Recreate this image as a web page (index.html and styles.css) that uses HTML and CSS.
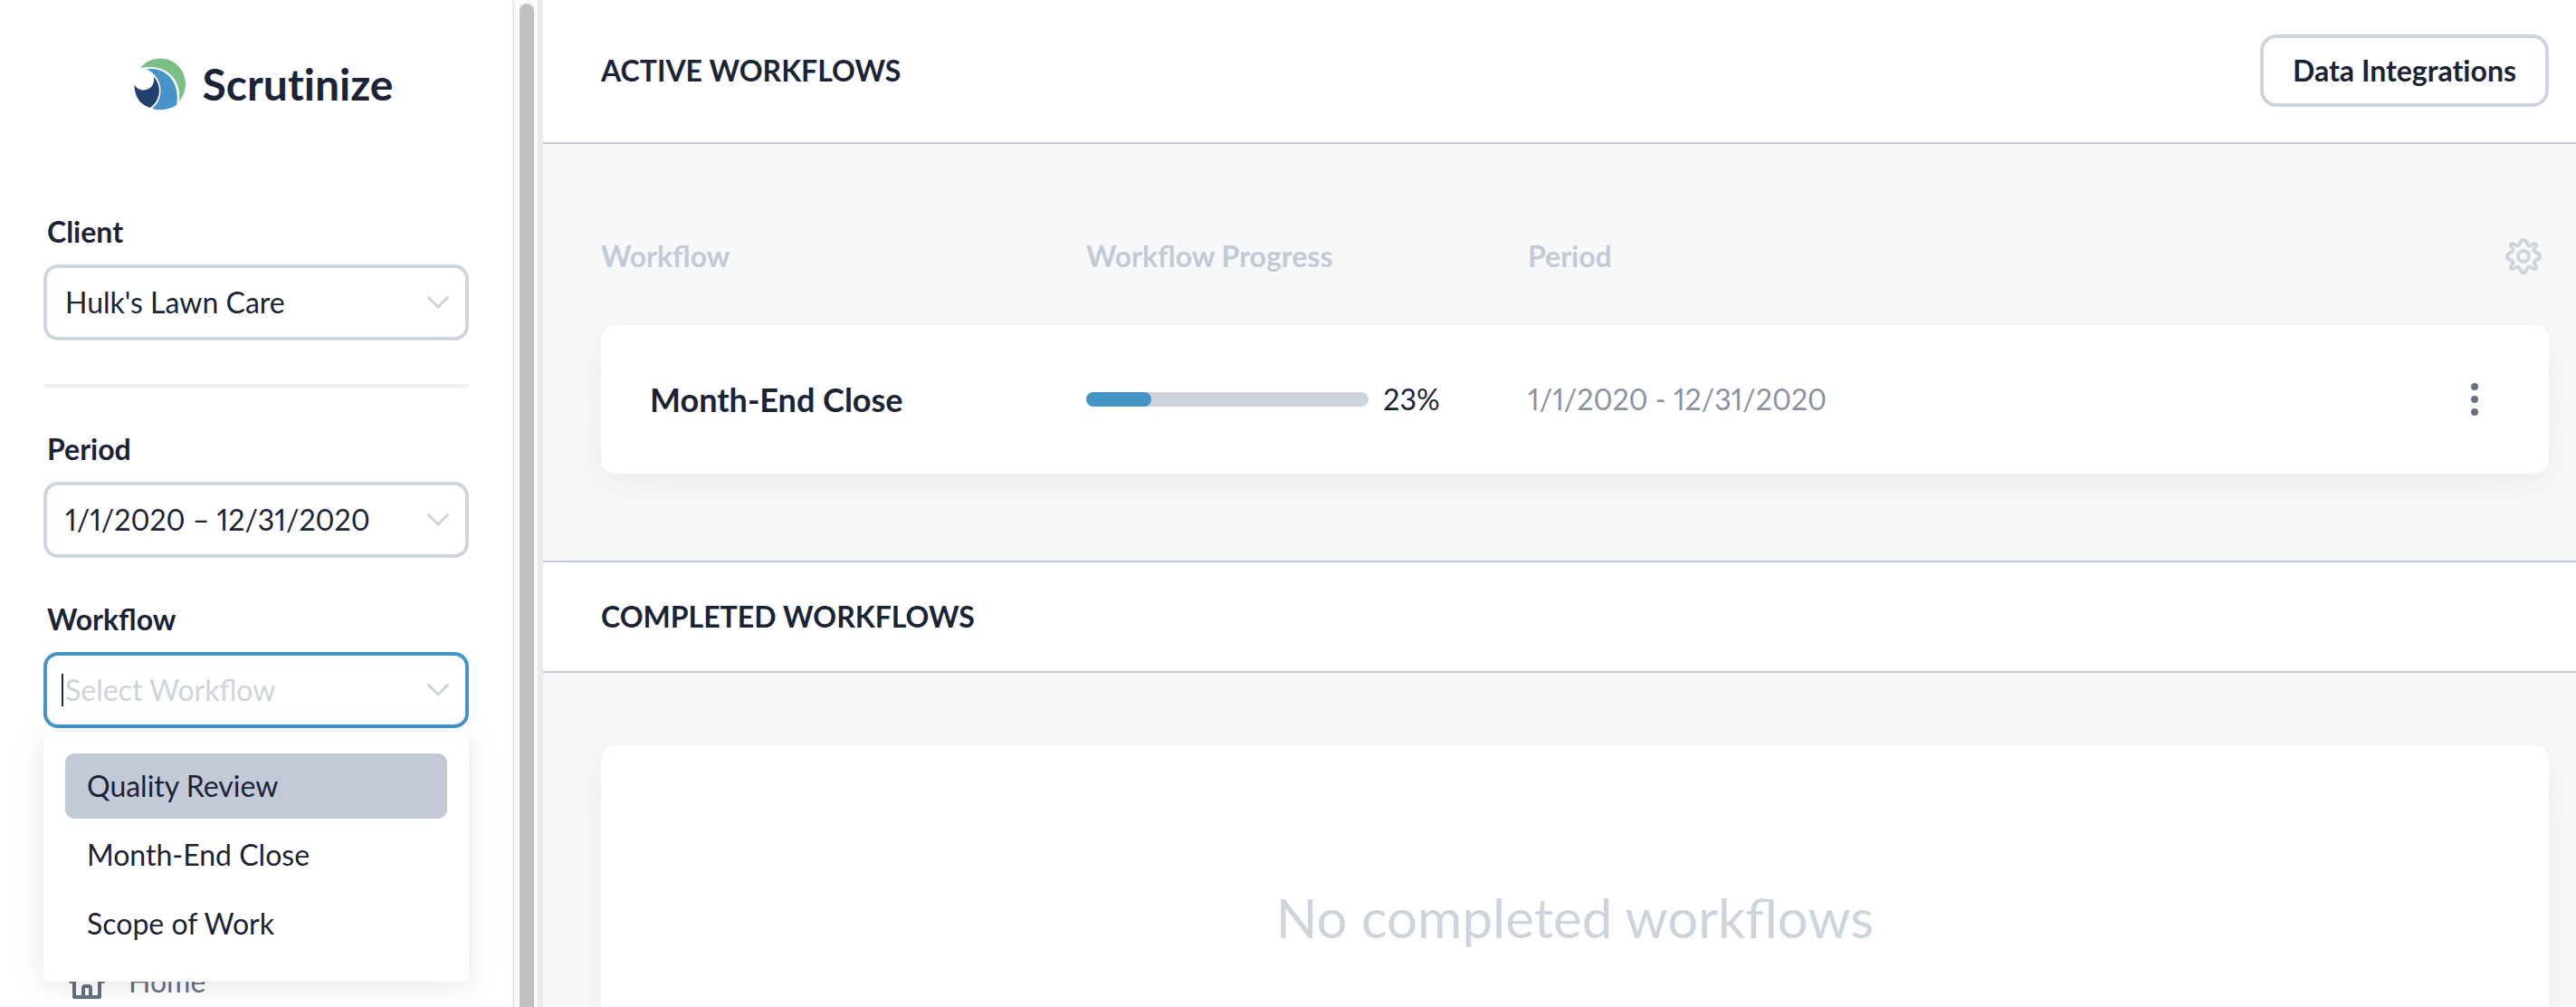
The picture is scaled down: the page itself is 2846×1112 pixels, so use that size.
FILE: index.html
```html
<!DOCTYPE html>
<html lang="en">
<head>
    <meta charset="UTF-8">
    <meta name="viewport" content="width=device-width, initial-scale=1.0">
    <title>Scrutinize</title>
    <link rel="stylesheet" href="styles.css">
</head>

<body>
    <aside class="sidebar">
        <a href="#" class="logo">
            <svg class="logo-mark" viewBox="0 0 58 58" aria-hidden="true">
                <path fill="#7cbf86" d="M7 11C13 4 20 .500 29 .500C45 .500 57 13 57 29C57 36 54 43 50 48C53 24 36 5 7 11Z"/>
                <path fill="#4694c8" d="M14 12.500C34 9 52 26 47 52C40 57 30 58.500 20 56C33 46 34 22 14 12.500Z"/>
                <path fill="#233f6b" d="M.500 29C2 33 6 35.500 11 35.500C18 35 23 30 22 21C30 30 31 45 18 55C7 52 0 42 .500 29Z"/>
            </svg>
            Scrutinize
        </a>

        <form class="filters">
            <div class="field">
                <label for="client">Client</label>
                <div class="select-box">
                    <select id="client">
                        <option>Hulk's Lawn Care</option>
                    </select>
                    <svg class="chevron" viewBox="0 0 24 14" aria-hidden="true"><path d="M1.500 1.500L12 12L22.500 1.500"/></svg>
                </div>
            </div>

            <hr>

            <div class="field">
                <label for="period">Period</label>
                <div class="select-box">
                    <select id="period" class="dates">
                        <option>1/1/2020 – 12/31/2020</option>
                    </select>
                    <svg class="chevron" viewBox="0 0 24 14" aria-hidden="true"><path d="M1.500 1.500L12 12L22.500 1.500"/></svg>
                </div>
            </div>

            <div class="field">
                <label for="workflow">Workflow</label>
                <div class="select-box active">
                    <span class="caret"></span>
                    <input type="text" id="workflow" placeholder="Select Workflow" autocomplete="off">
                    <svg class="chevron" viewBox="0 0 24 14" aria-hidden="true"><path d="M1.500 1.500L12 12L22.500 1.500"/></svg>
                    <ul class="menu">
                        <li><button type="button" class="selected">Quality Review</button></li>
                        <li><button type="button">Month-End Close</button></li>
                        <li><button type="button">Scope of Work</button></li>
                    </ul>
                </div>
            </div>
        </form>

        <nav>
            <a href="#" class="nav-link">
                <svg viewBox="0 0 40 40" aria-hidden="true"><path d="M6 20H2L20 3L38 20H34M6 19V37H34V19M16 37V27Q16 25 18 25H22Q24 25 24 27V37"/></svg>
                Home
            </a>
        </nav>
    </aside>
    <div class="scrollbar"><div class="thumb"></div></div>

    <main>
        <header class="section-header top">
            <h2>Active Workflows</h2>
            <button type="button" class="btn">Data Integrations</button>
        </header>
        <section class="section-body">
            <table>
                <thead>
                    <tr>
                        <th class="col-name">Workflow</th>
                        <th class="col-progress">Workflow Progress</th>
                        <th>Period</th>
                        <th>
                            <button type="button" class="icon-btn" aria-label="Table settings">
                                <svg class="gear" viewBox="0 0 40 40" aria-hidden="true">
                                    <path d="M20 2C24.500 2 23 7 26 8.200C29 9.500 30.500 4.500 33.500 6.500C36 9.500 30.500 11 31.800 14C33 17 38 15.500 38 20C38 24.500 33 23 31.800 26C30.500 29 36 30.500 33.500 33.500C30.500 36 29 30.500 26 31.800C23 33 24.500 38 20 38C15.500 38 17 33 14 31.800C11 30.500 9.500 36 6.500 33.500C4 30.500 9.500 29 8.200 26C7 23 2 24.500 2 20C2 15.500 7 17 8.200 14C9.500 11 4 9.500 6.500 6.500C9.500 4 11 9.500 14 8.200C17 7 15.500 2 20 2Z"/>
                                    <circle cx="20" cy="20" r="6"/>
                                </svg>
                            </button>
                        </th>
                    </tr>
                </thead>
                <tbody>
                    <tr>
                        <td class="name">Month-End Close</td>
                        <td>
                            <div class="progress">
                                <div class="track"><div class="bar" style="width: 23%"></div></div>
                                23%
                            </div>
                        </td>
                        <td class="period dates">1/1/2020 - 12/31/2020</td>
                        <td>
                            <button type="button" class="icon-btn" aria-label="More actions">
                                <svg class="dots" viewBox="0 0 8 36" aria-hidden="true"><circle cx="4" cy="4" r="4"/><circle cx="4" cy="18" r="4"/><circle cx="4" cy="32" r="4"/></svg>
                            </button>
                        </td>
                    </tr>
                </tbody>
            </table>
        </section>

        <header class="section-header">
            <h2>Completed Workflows</h2>
        </header>
        <section class="section-body completed">
            <p class="empty">No completed workflows</p>
        </section>
    </main>
</body>
</html>
```

FILE: styles.css
```css
* {
    box-sizing: border-box;
}
body {
    margin: 0;
    display: flex;
    height: 100vh;
    overflow: hidden;
    font-family: Lato, sans-serif;
    font-size: 32px;
    line-height: 40px;
    color: #1b2437;
    background-color: #f6f8fa;
}
button, input, select {
    font: inherit;
    color: inherit;
    background: none;
    border: none;
    margin: 0;
    padding: 0;
}
button {
    cursor: pointer;
}

/* Sidebar */
.sidebar {
    flex: none;
    width: 566px;
    padding: 64px 48px 0;
    background-color: #fff;
}
.logo {
    display: flex;
    justify-content: center;
    align-items: center;
    gap: 18px;
    height: 58px;
    margin-bottom: 114px;
    padding-left: 16px;
    font-size: 48px;
    font-weight: bold;
    font-variant-ligatures: none;
    color: inherit;
    text-decoration: none;
}
.logo-mark {
    width: 58px;
    height: 58px;
}
.field {
    margin-bottom: 48px;
}
.field label {
    display: block;
    padding-left: 4px;
    margin-bottom: 16px;
    font-weight: bold;
}
.select-box {
    position: relative;
    display: flex;
    align-items: center;
    height: 84px;
    padding: 0 18px 0 20px;
    border: 4px solid #cdd4de;
    border-radius: 16px;
}
.select-box.active {
    border-color: #4694c8;
}
.select-box select, .select-box input {
    flex: 1;
    min-width: 0;
    appearance: none;
    outline: none;
}
.select-box input::placeholder {
    color: #cdd4de;
    opacity: 1;
}
.dates {
    font-variant-numeric: proportional-nums;
}
.caret {
    width: 2px;
    height: 36px;
    margin-left: -4px;
    margin-right: 2px;
    background-color: #1e2a4f;
}
.chevron {
    width: 24px;
    height: 14px;
    fill: none;
    stroke: #cdd4de;
    stroke-width: 3;
    stroke-linecap: round;
    stroke-linejoin: round;
}
hr {
    height: 4px;
    margin: 0 0 48px;
    border: none;
    background-color: #eff1f5;
}
.menu {
    position: absolute;
    top: 84px;
    left: -4px;
    right: -4px;
    margin: 0;
    padding: 24px;
    list-style: none;
    background-color: #fff;
    border-radius: 8px;
    box-shadow: 0 4px 32px rgba(0, 0, 0, 0.1);
}
.menu li {
    margin-bottom: 4px;
}
.menu button {
    width: 100%;
    height: 72px;
    padding: 0 24px;
    text-align: left;
    border-radius: 10px;
}
.menu .selected {
    background-color: #c3c9d7;
}
.nav-link {
    display: flex;
    align-items: center;
    gap: 26px;
    margin-top: 260px;
    padding-left: 28px;
    color: #667085;
    text-decoration: none;
}
.nav-link svg {
    width: 40px;
    height: 40px;
    fill: none;
    stroke: currentColor;
    stroke-width: 4;
    stroke-linejoin: round;
}
.scrollbar {
    flex: none;
    width: 34px;
    padding: 4px 4px 0 6px;
    background-color: #fafafa;
    border-left: 2px solid #e7e7e7;
    border-right: 6px solid #ebebef;
}
.thumb {
    height: 100%;
    border-radius: 8px 8px 0 0;
    background-color: #c1c1c1;
}

/* Main */
main {
    flex: 1;
    min-width: 0;
}
.section-header {
    position: relative;
    display: flex;
    justify-content: space-between;
    align-items: center;
    height: 124px;
    padding: 0 30px 0 64px;
    background-color: #fff;
    border-top: 2px solid #c3c9d7;
    border-bottom: 2px solid #c3c9d7;
}
.section-header.top {
    height: 159px;
    padding-bottom: 2px;
    border-top: none;
}
.section-header h2 {
    margin: 0;
    font-size: 32px;
    text-transform: uppercase;
}
.btn {
    height: 80px;
    padding: 0 32px;
    font-weight: bold;
    font-variant-ligatures: none;
    border: 4px solid #cdd4de;
    border-radius: 18px;
}
.section-body {
    padding: 72px 30px 96px 64px;
}
table {
    width: 100%;
    table-layout: fixed;
    border-spacing: 0;
}
th {
    height: 128px;
    padding: 0 8px 24px 0;
    text-align: left;
    color: #c3c9d7;
}
.col-name {
    width: 536px;
}
.col-progress {
    width: 488px;
}
tbody tr {
    border-radius: 16px;
    box-shadow: 0 8px 24px rgba(0, 0, 0, 0.03), 0 16px 80px rgba(0, 0, 0, 0.03);
}
td {
    height: 164px;
    padding: 0;
    background-color: #fff;
}
td:first-child {
    padding-left: 54px;
    border-radius: 16px 0 0 16px;
}
td:last-child {
    padding-right: 78px;
    border-radius: 0 16px 16px 0;
}
.name {
    font-size: 36px;
    font-weight: bold;
}
.progress {
    display: flex;
    align-items: center;
    gap: 16px;
}
.track {
    width: 312px;
    height: 16px;
    border-radius: 8px;
    background-color: #cdd4de;
}
.bar {
    height: 100%;
    border-radius: 8px;
    background-color: #4694c8;
}
.period {
    color: #8b92a4;
}
.icon-btn {
    display: block;
    margin-left: auto;
}
.icon-btn svg {
    display: block;
}
.gear {
    width: 40px;
    height: 40px;
    fill: none;
    stroke: #cdd4de;
    stroke-width: 4;
}
.dots {
    width: 8px;
    height: 36px;
    fill: #667085;
}
.completed {
    padding-top: 80px;
}
.empty {
    display: flex;
    justify-content: center;
    align-items: center;
    height: 380px;
    margin: 0;
    font-size: 60px;
    color: #cdd4de;
    background-color: #fff;
    border-radius: 16px;
    box-shadow: 0 8px 24px rgba(0, 0, 0, 0.03), 0 16px 80px rgba(0, 0, 0, 0.03);
}
```
